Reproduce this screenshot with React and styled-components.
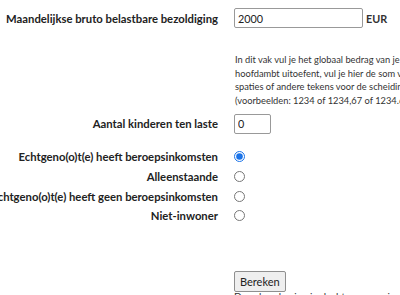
import React from "react";
import styled, { createGlobalStyle } from "styled-components";

const Global = createGlobalStyle`
  html, body { margin: 0; padding: 0; background: #fff; overflow: hidden; }
  body { font-family: Lato, "Open Sans", sans-serif; color: #222; }
`;

const Form = styled.form`
  display: grid;
  grid-template-columns: 260px max-content;
  column-gap: 16px;
  margin-left: -42px;
  padding-top: 8px;
  align-items: center;
`;

const Label = styled.label`
  font-weight: 700;
  font-size: 11.3px;
  text-align: right;
  white-space: nowrap;
  color: #222;
  margin-top: ${(p) => p.$mt || 0}px;
`;

const Cell = styled.div`
  display: flex;
  align-items: center;
  gap: 3px;
  white-space: nowrap;
  margin-top: ${(p) => p.$mt || 0}px;
  height: ${(p) => (p.$h ? p.$h + "px" : "auto")};
`;

const Spacer = styled.div``;

const TextInput = styled.input`
  box-sizing: border-box;
  width: ${(p) => p.$w}px;
  height: 20px;
  border: 1px solid #999;
  border-radius: 2px;
  padding: 0 3px;
  font-family: Lato, sans-serif;
  font-size: 10.8px;
  color: #222;
  margin: 0;
`;

const Unit = styled.span`
  font-size: 10.8px;
  font-weight: 700;
  color: #333;
`;

const Help = styled.div`
  font-size: 9.3px;
  line-height: 13.7px;
  color: #333;
  white-space: nowrap;
  margin-top: 25px;
  padding-left: 1px;
`;

const Radio = styled.input`
  width: 11px;
  height: 11px;
  margin: 0;
  accent-color: #1a73e8;
`;

const Button = styled.button`
  font-family: Lato, sans-serif;
  font-size: 11px;
  color: #222;
  background: #efefef;
  border: 1px solid #8f8f8f;
  border-radius: 2px;
  height: 21px;
  padding: 0 5px;
  margin: 0;
`;

const Note = styled.div`
  font-size: 10px;
  line-height: 12px;
  color: #333;
  white-space: nowrap;
  margin-top: -2px;
`;

export default function App() {
  const radios = [
    ["Echtgeno(o)t(e) heeft beroepsinkomsten", true, 13],
    ["Alleenstaande", false, 0],
    ["Echtgeno(o)t(e) heeft geen beroepsinkomsten", false, 0],
    ["Niet-inwoner", false, 0],
  ];
  return (
    <>
      <Global />
      <Form onSubmit={(e) => e.preventDefault()}>
        <Label>Maandelijkse bruto belastbare bezoldiging</Label>
        <Cell>
          <TextInput $w={129} defaultValue="2000" />
          <Unit>EUR</Unit>
        </Cell>
        <Spacer />
        <Help>
          In dit vak vul je het globaal bedrag van je bezoldiging in. Als je meer dan één beroepswerkzaamheid in
          <br />
          hoofdambt uitoefent, vul je hier de som van de bezoldigingen in. Gebruik geen punten,
          <br />
          spaties of andere tekens voor de scheiding van duizendtallen. Gebruik een komma of punt
          <br />
          (voorbeelden: 1234 of 1234,67 of 1234.67).
        </Help>
        <Label $mt={6}>Aantal kinderen ten laste</Label>
        <Cell $mt={6}>
          <TextInput $w={37} defaultValue="0" />
        </Cell>
        {radios.map(([t, c, mt]) => (
          <React.Fragment key={t}>
            <Label $mt={mt}>{t}</Label>
            <Cell $mt={mt} $h={19.7}>
              <Radio type="radio" name="status" defaultChecked={c} />
            </Cell>
          </React.Fragment>
        ))}
        <Spacer />
        <Cell $mt={45}>
          <Button type="submit">Bereken</Button>
        </Cell>
        <Spacer />
        <Note>Deze berekening is slechts een raming en heeft geen juridische waarde.</Note>
      </Form>
    </>
  );
}
